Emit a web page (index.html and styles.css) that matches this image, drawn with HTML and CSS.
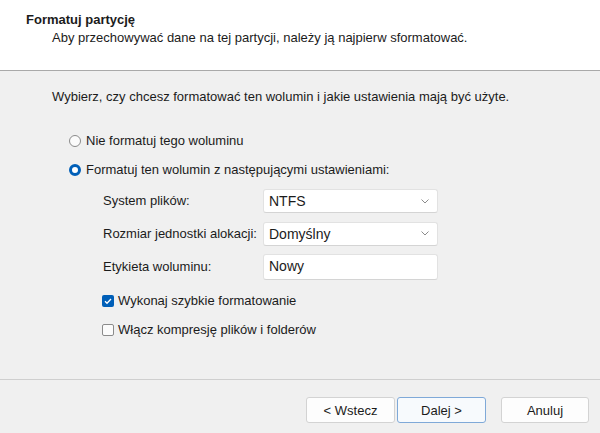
FILE: index.html
```html
<!DOCTYPE html>
<html lang="pl">
<head>
    <meta charset="UTF-8">
    <meta name="viewport" content="width=device-width, initial-scale=1.0">
    <title>Formatuj partycję</title>
    <link rel="stylesheet" href="styles.css">
</head>
<body>
    <div class="wizard">
        <header class="head">
            <h1 class="head-title">Formatuj partycję</h1>
            <p class="head-text">Aby przechowywać dane na tej partycji, należy ją najpierw sformatować.</p>
        </header>

        <main class="content">
            <p class="lead">Wybierz, czy chcesz formatować ten wolumin i jakie ustawienia mają być użyte.</p>

            <div class="options">
                <label class="radio"><span class="radio-dot"></span>Nie formatuj tego woluminu</label>
                <label class="radio checked"><span class="radio-dot"></span>Formatuj ten wolumin z następującymi ustawieniami:</label>

                <div class="settings">
                    <span class="field-label">System plików:</span>
                    <div class="combo">
                        <span>NTFS</span>
                        <svg class="chevron" width="8" height="5" viewBox="0 0 8 5"><path d="M0.5 0.5 L4 4 L7.5 0.5" fill="none" stroke="#8c8c8c" stroke-width="1"/></svg>
                    </div>

                    <span class="field-label">Rozmiar jednostki alokacji:</span>
                    <div class="combo">
                        <span>Domyślny</span>
                        <svg class="chevron" width="8" height="5" viewBox="0 0 8 5"><path d="M0.5 0.5 L4 4 L7.5 0.5" fill="none" stroke="#8c8c8c" stroke-width="1"/></svg>
                    </div>

                    <span class="field-label">Etykieta woluminu:</span>
                    <div class="text-box">Nowy</div>
                </div>

                <div class="checks">
                    <label class="check checked">
                        <span class="check-box">
                            <svg width="12" height="12" viewBox="0 0 12 12"><path d="M3 6.2 L5 8.2 L9 4" fill="none" stroke="#fff" stroke-width="1.3"/></svg>
                        </span>
                        Wykonaj szybkie formatowanie
                    </label>
                    <label class="check"><span class="check-box"></span>Włącz kompresję plików i folderów</label>
                </div>
            </div>
        </main>

        <footer class="foot">
            <button class="btn">&lt; Wstecz</button>
            <button class="btn default">Dalej &gt;</button>
            <button class="btn cancel">Anuluj</button>
        </footer>
    </div>
</body>
</html>
```

FILE: styles.css
```css
body {
    margin: 0;
    font-family: 'Liberation Sans', Arial, sans-serif;
    font-size: 13px;
    line-height: 16px;
    color: #1b1b1b;
    background: #f0f0f0;
}

.wizard {
    width: 600px;
    height: 433px;
    display: flex;
    flex-direction: column;
    overflow: hidden;
}

.head {
    height: 71px;
    box-sizing: border-box;
    padding: 12px 0 0 26px;
    background: #fff;
    border-bottom: 1px solid #a9a9a9;
}

.head-title {
    margin: 0;
    font-size: 13px;
    font-weight: bold;
    line-height: 16px;
}

.head-text {
    margin: 2px 0 0 26px;
}

.content {
    height: 308px;
    box-sizing: border-box;
    padding-top: 18px;
}

.lead {
    margin: 0 0 0 52px;
}

.options {
    padding: 28px 0 0 69px;
    display: flex;
    flex-direction: column;
}

.radio {
    display: flex;
    align-items: center;
    gap: 5px;
}

.radio + .radio {
    margin-top: 13px;
}

.radio-dot {
    width: 12px;
    height: 12px;
    box-sizing: border-box;
    border: 1px solid #8b8b8b;
    border-radius: 50%;
    background: #fbfbfb;
}

.radio.checked .radio-dot {
    border: 3.5px solid #005fb8;
    background: #fff;
}

.settings {
    margin: 11px 0 0 34px;
    display: grid;
    grid-template-columns: 160px 175px;
    grid-template-rows: 24px 24px 26px;
    row-gap: 8.5px;
    align-items: center;
}

.combo,
.text-box {
    height: 100%;
    box-sizing: border-box;
    background: #fff;
    border: 1px solid #e2e2e2;
    border-bottom-color: #d4d4d4;
    border-radius: 3px;
    font-size: 14px;
    padding-left: 5px;
}

.combo {
    display: flex;
    align-items: center;
    justify-content: space-between;
    padding-right: 8px;
}

.text-box {
    padding-top: 3px;
}

.checks {
    margin: 13px 0 0 33px;
    display: flex;
    flex-direction: column;
    gap: 13px;
}

.check {
    display: flex;
    align-items: center;
    gap: 4px;
}

.check-box {
    width: 12px;
    height: 12px;
    box-sizing: border-box;
    border: 1px solid #8b8b8b;
    border-radius: 2px;
    background: #fbfbfb;
    display: flex;
}

.check.checked .check-box {
    border: none;
    background: #005fb8;
}

.foot {
    flex: 1;
    border-top: 1px solid #cfcfcf;
    display: flex;
    align-items: flex-start;
    padding: 17px 11px 0 0;
    justify-content: flex-end;
}

.btn {
    width: 89px;
    height: 26px;
    padding: 0;
    font-family: inherit;
    font-size: 13px;
    color: #1b1b1b;
    background: #fdfdfd;
    border: 1px solid #d3d3d3;
    border-radius: 3px;
}

.btn + .btn {
    margin-left: 2px;
}

.btn.default {
    background: #f7fafd;
    border-color: #7fa9d8;
}

.btn.cancel {
    width: 88px;
    margin-left: 15px;
}
```
